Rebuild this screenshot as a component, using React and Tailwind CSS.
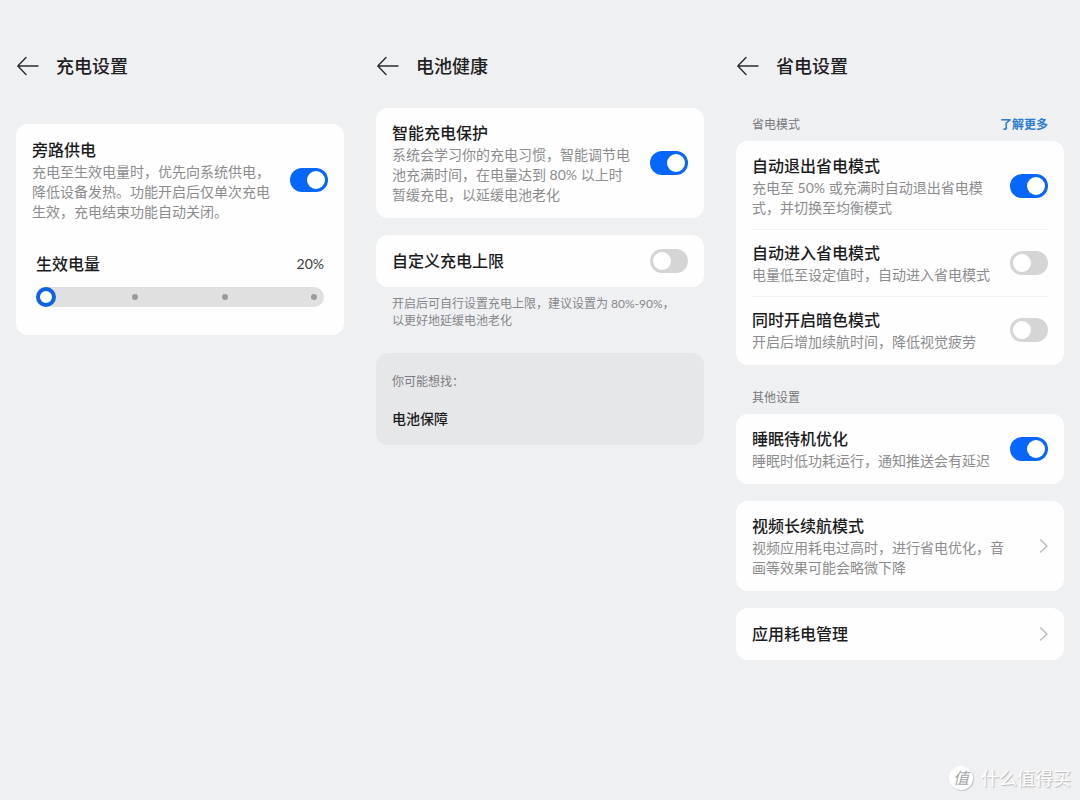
import React, { useId, useState } from "react";

function BackIcon() {
  return (
    <svg width="24" height="24" viewBox="0 0 24 24" fill="none" stroke="currentColor" strokeWidth="1.4" strokeLinecap="round" strokeLinejoin="round">
      <path d="M22 12H2M10 3.5L1.8 12L10 20.5" />
    </svg>
  );
}

function ChevronIcon() {
  return (
    <svg className="shrink-0 text-[#b9b9bb]" width="9" height="14" viewBox="0 0 9 14" fill="none" stroke="currentColor" strokeWidth="1.4" strokeLinecap="round" strokeLinejoin="round">
      <path d="M1.6 1L8 7L1.6 13" />
    </svg>
  );
}

function Screen({ title, children }) {
  return (
    <section className="px-4 pt-10">
      <header className="flex h-[52px] items-center gap-4">
        <button type="button" aria-label="返回" className="text-[#2b2c2e]">
          <BackIcon />
        </button>
        <h1 className="text-lg font-medium text-[#1f2022]">{title}</h1>
      </header>
      {children}
    </section>
  );
}

function Card({ className = "", children }) {
  return <div className={`rounded-xl bg-[#fefefe] ${className}`}>{children}</div>;
}

function RowText({ title, desc }) {
  return (
    <span className="min-w-0 flex-1">
      <span className="block text-base leading-6 font-medium text-[#1c1c1e]">{title}</span>
      {desc && <span className="block text-sm leading-5 text-[#8c8c8e]">{desc}</span>}
    </span>
  );
}

function SwitchRow({ title, desc, defaultOn = false, className = "min-h-[52px] py-[13px]" }) {
  const id = useId();
  const [on, setOn] = useState(defaultOn);

  return (
    <div className={`flex items-center gap-4 ${className}`}>
      <label htmlFor={id} className="flex min-w-0 flex-1">
        <RowText title={title} desc={desc} />
      </label>
      <input
        id={id}
        type="checkbox"
        role="switch"
        checked={on}
        onChange={(e) => setOn(e.target.checked)}
        className="h-6 w-[38px] shrink-0 cursor-pointer appearance-none rounded-full bg-[#d5d5d5] p-[3px] transition-colors before:block before:size-[18px] before:rounded-full before:bg-white before:transition-transform checked:bg-[#0866fb] checked:before:translate-x-[14px]"
      />
    </div>
  );
}

function LinkRow({ title, desc }) {
  return (
    <a href="#" className="flex min-h-[52px] items-center gap-7 px-4 py-[13px]">
      <RowText title={title} desc={desc} />
      <ChevronIcon />
    </a>
  );
}

function LevelSlider() {
  const [level, setLevel] = useState(20);

  return (
    <div className="px-5 pt-[17px] pb-7">
      <div className="flex h-6 items-center justify-between">
        <label htmlFor="level" className="text-base font-medium text-[#1c1c1e]">
          生效电量
        </label>
        <output htmlFor="level" className="text-sm text-[#3c3c3e]">
          {level}%
        </output>
      </div>
      <div className="relative mt-[11px] h-5 rounded-full bg-[#e0e0e0]">
        {/* Stops */}
        <div className="absolute inset-0 flex items-center justify-between px-[7px]">
          <span className="size-1.5 rounded-full bg-[#9b9b9b]" />
          <span className="size-1.5 rounded-full bg-[#9b9b9b]" />
          <span className="size-1.5 rounded-full bg-[#9b9b9b]" />
          <span className="size-1.5 rounded-full bg-[#9b9b9b]" />
        </div>
        <input
          id="level"
          type="range"
          min="20"
          max="80"
          step="20"
          value={level}
          onChange={(e) => setLevel(Number(e.target.value))}
          className="relative block h-5 w-full cursor-pointer appearance-none bg-transparent [&::-webkit-slider-thumb]:size-5 [&::-webkit-slider-thumb]:appearance-none [&::-webkit-slider-thumb]:rounded-full [&::-webkit-slider-thumb]:border-4 [&::-webkit-slider-thumb]:border-solid [&::-webkit-slider-thumb]:border-[#0f62e0] [&::-webkit-slider-thumb]:bg-white"
        />
      </div>
    </div>
  );
}

function ChargingScreen() {
  return (
    <Screen title="充电设置">
      <Card className="mt-8">
        <SwitchRow
          title="旁路供电"
          desc="充电至生效电量时，优先向系统供电，降低设备发热。功能开启后仅单次充电生效，充电结束功能自动关闭。"
          defaultOn
          className="px-4 pt-3.5 pb-[13px]"
        />
        <LevelSlider />
      </Card>
    </Screen>
  );
}

function BatteryHealthScreen() {
  return (
    <Screen title="电池健康">
      <Card className="mt-4 px-4">
        <SwitchRow
          title="智能充电保护"
          desc="系统会学习你的充电习惯，智能调节电池充满时间，在电量达到 80% 以上时暂缓充电，以延缓电池老化"
          defaultOn
        />
      </Card>
      <Card className="mt-[17px] px-4">
        <SwitchRow title="自定义充电上限" />
      </Card>
      <p className="mt-2 pr-6 pl-4 text-xs leading-[17px] text-[#86878a]">
        开启后可自行设置充电上限，建议设置为 80%-90%，以更好地延缓电池老化
      </p>
      <div className="mt-6 rounded-xl bg-[#e6e7e9] px-4 pt-5 pb-4">
        <h2 className="text-xs leading-[17px] text-[#7b7c7f]">你可能想找：</h2>
        <a href="#" className="mt-[19px] block text-sm leading-5 font-medium text-[#1c1c1e]">
          电池保障
        </a>
      </div>
    </Screen>
  );
}

function PowerSavingScreen() {
  return (
    <Screen title="省电设置">
      <div className="mt-6 flex justify-between px-4 text-xs leading-[17px]">
        <h2 className="text-[#77787b]">省电模式</h2>
        <a href="#" className="font-bold text-[#2a7ccf]">
          了解更多
        </a>
      </div>
      <Card className="mt-2 divide-y divide-[#f1f1f2] px-4 py-0.5">
        <SwitchRow
          title="自动退出省电模式"
          desc="充电至 50% 或充满时自动退出省电模式，并切换至均衡模式"
          defaultOn
          className="py-[11px]"
        />
        <SwitchRow
          title="自动进入省电模式"
          desc="电量低至设定值时，自动进入省电模式"
          className="py-[11px]"
        />
        <SwitchRow
          title="同时开启暗色模式"
          desc="开启后增加续航时间，降低视觉疲劳"
          className="py-[11px]"
        />
      </Card>

      <h2 className="mt-6 px-4 text-xs leading-[17px] text-[#77787b]">其他设置</h2>
      <Card className="mt-2 px-4">
        <SwitchRow title="睡眠待机优化" desc="睡眠时低功耗运行，通知推送会有延迟" defaultOn />
      </Card>
      <Card className="mt-[17px]">
        <LinkRow title="视频长续航模式" desc="视频应用耗电过高时，进行省电优化，音画等效果可能会略微下降" />
      </Card>
      <Card className="mt-[17px]">
        <LinkRow title="应用耗电管理" />
      </Card>
    </Screen>
  );
}

function Watermark() {
  return (
    <div className="absolute right-[9px] bottom-2.5 flex items-center gap-2 text-white">
      <span className="flex size-6 items-center justify-center rounded-full bg-white text-base text-[#a9aaac] italic shadow-[1px_1px_1px_#c4c5c7]">
        值
      </span>
      <span className="text-lg leading-6 [text-shadow:1px_1px_1px_#b4b5b7]">什么值得买</span>
    </div>
  );
}

export default function App() {
  return (
    <main
      lang="zh-CN"
      className="relative min-h-screen bg-[#eff0f2] pb-16 font-['Lato','Noto_Sans_CJK_SC',sans-serif] md:pb-0"
    >
      <div className="grid grid-cols-1 md:grid-cols-3">
        <ChargingScreen />
        <BatteryHealthScreen />
        <PowerSavingScreen />
      </div>
      <Watermark />
    </main>
  );
}
